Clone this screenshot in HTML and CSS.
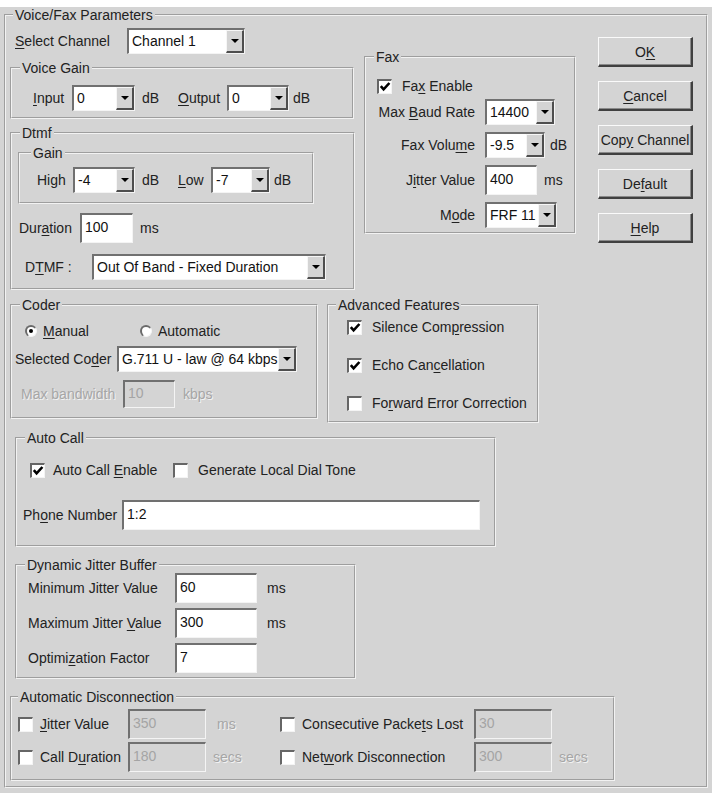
FILE: index.html
```html
<!DOCTYPE html>
<html lang="en">
<head>
    <meta charset="UTF-8">
    <meta name="viewport" content="width=device-width, initial-scale=1.0">
    <title>Voice/Fax Parameters</title>
    <link rel="stylesheet" href="styles.css">
</head>
<body>
    <div class="dialog">
        <fieldset class="group outer">
            <legend>Voice/Fax Parameters</legend>

            <div class="top-section">
                <!-- Left column: channel, voice gain, dtmf -->
                <div class="left-col">
                    <div class="channel-row">
                        <span><u>S</u>elect Channel</span>
                        <div class="combo"><span class="value">Channel 1</span><span class="drop"></span></div>
                    </div>

                    <fieldset class="group voice-gain">
                        <legend>Voice Gain</legend>
                        <div class="gain-row">
                            <span><u>I</u>nput</span>
                            <div class="combo"><span class="value">0</span><span class="drop"></span></div>
                            <span class="unit">dB</span>
                            <span><u>O</u>utput</span>
                            <div class="combo"><span class="value">0</span><span class="drop"></span></div>
                            <span class="unit unit-tight">dB</span>
                        </div>
                    </fieldset>

                    <fieldset class="group dtmf">
                        <legend>Dtmf</legend>
                        <fieldset class="group dtmf-gain">
                            <legend>Gain</legend>
                            <div class="dtmf-gain-row">
                                <span>High</span>
                                <div class="combo"><span class="value">-4</span><span class="drop"></span></div>
                                <span class="unit">dB</span>
                                <span><u>L</u>ow</span>
                                <div class="combo"><span class="value">-7</span><span class="drop"></span></div>
                                <span class="unit unit-tight">dB</span>
                            </div>
                        </fieldset>
                        <div class="duration-row">
                            <span>Dur<u>a</u>tion</span>
                            <div class="field">100</div>
                            <span class="unit">ms</span>
                        </div>
                        <div class="dtmf-row">
                            <span>D<u>T</u>MF :</span>
                            <div class="combo"><span class="value">Out Of Band - Fixed Duration</span><span class="drop"></span></div>
                        </div>
                    </fieldset>
                </div>

                <!-- Fax -->
                <fieldset class="group fax">
                    <legend>Fax</legend>
                    <div class="check-row fax-enable">
                        <span class="check on"><svg viewBox="0 0 12 12"><path d="M1.8 5.2 L4.6 8.4 L10.4 2" /></svg></span>
                        <span>Fa<u>x</u> Enable</span>
                    </div>
                    <div class="fax-grid">
                        <span class="label">Max <u>B</u>aud Rate</span>
                        <div class="combo combo-baud"><span class="value">14400</span><span class="drop"></span></div>

                        <span class="label">Fax Volu<u>m</u>e</span>
                        <div class="with-unit">
                            <div class="combo combo-volume"><span class="value">-9.5</span><span class="drop"></span></div>
                            <span>dB</span>
                        </div>

                        <span class="label">J<u>i</u>tter Value</span>
                        <div class="with-unit">
                            <div class="field field-jitter">400</div>
                            <span class="unit-ms">ms</span>
                        </div>

                        <span class="label">M<u>o</u>de</span>
                        <div class="combo combo-mode"><span class="value">FRF 11</span><span class="drop"></span></div>
                    </div>
                </fieldset>

                <!-- Buttons -->
                <div class="buttons">
                    <button>O<u>K</u></button>
                    <button><u>C</u>ancel</button>
                    <button>Cop<u>y</u> Channel</button>
                    <button>De<u>f</u>ault</button>
                    <button><u>H</u>elp</button>
                </div>
            </div>

            <div class="coder-section">
                <fieldset class="group coder">
                    <legend>Coder</legend>
                    <div class="radio-row">
                        <div class="radio-item first"><span class="radio on"></span><span><u>M</u>anual</span></div>
                        <div class="radio-item"><span class="radio"></span><span>Automatic</span></div>
                    </div>
                    <div class="coder-row">
                        <span>Selected Co<u>d</u>er</span>
                        <div class="combo"><span class="value">G.711 U - law @ 64 kbps</span><span class="drop"></span></div>
                    </div>
                    <div class="bandwidth-row">
                        <span class="disabled-text">Max bandwidth</span>
                        <div class="field disabled">10</div>
                        <span class="unit disabled-text">kbps</span>
                    </div>
                </fieldset>

                <fieldset class="group advanced">
                    <legend>Advanced Features</legend>
                    <div class="check-row">
                        <span class="check on"><svg viewBox="0 0 12 12"><path d="M1.8 5.2 L4.6 8.4 L10.4 2" /></svg></span>
                        <span>Silence Com<u>p</u>ression</span>
                    </div>
                    <div class="check-row">
                        <span class="check on"><svg viewBox="0 0 12 12"><path d="M1.8 5.2 L4.6 8.4 L10.4 2" /></svg></span>
                        <span>Echo Can<u>c</u>ellation</span>
                    </div>
                    <div class="check-row">
                        <span class="check"></span>
                        <span>Fo<u>r</u>ward Error Correction</span>
                    </div>
                </fieldset>
            </div>

            <fieldset class="group auto-call">
                <legend>Auto Call</legend>
                <div class="auto-call-row">
                    <div class="check-row first">
                        <span class="check on"><svg viewBox="0 0 12 12"><path d="M1.8 5.2 L4.6 8.4 L10.4 2" /></svg></span>
                        <span>Auto Call <u>E</u>nable</span>
                    </div>
                    <div class="check-row">
                        <span class="check"></span>
                        <span>Generate Local Dial Tone</span>
                    </div>
                </div>
                <div class="phone-row">
                    <span>Ph<u>o</u>ne Number</span>
                    <div class="field">1:2</div>
                </div>
            </fieldset>

            <fieldset class="group jitter-buffer">
                <legend>Dynamic Jitter Buffer</legend>
                <div class="jitter-grid">
                    <span>Minimum Jitter Value</span>
                    <div class="field">60</div>
                    <span class="unit">ms</span>

                    <span>Maximum Jitter <u>V</u>alue</span>
                    <div class="field">300</div>
                    <span class="unit">ms</span>

                    <span>Optimi<u>z</u>ation Factor</span>
                    <div class="field">7</div>
                    <span></span>
                </div>
            </fieldset>

            <fieldset class="group disconnect">
                <legend>Automatic Disconnection</legend>
                <div class="disconnect-grid">
                    <div class="check-row"><span class="check"></span><span><u>J</u>itter Value</span></div>
                    <div class="field disabled">350</div>
                    <span class="unit disabled-text">ms</span>
                    <div class="check-row"><span class="check"></span><span>Consecutive Packe<u>t</u>s Lost</span></div>
                    <div class="field disabled">30</div>
                    <span></span>

                    <div class="check-row"><span class="check"></span><span>Call D<u>u</u>ration</span></div>
                    <div class="field disabled">180</div>
                    <span class="unit unit-secs disabled-text">secs</span>
                    <div class="check-row"><span class="check"></span><span>Net<u>w</u>ork Disconnection</span></div>
                    <div class="field disabled">300</div>
                    <span class="unit unit-secs disabled-text">secs</span>
                </div>
            </fieldset>
        </fieldset>
    </div>
</body>
</html>
```

FILE: styles.css
```css
/* Base */
body {
    margin: 0;
    background-color: #fff;
    font-family: "Liberation Sans", Arial, sans-serif;
    font-size: 14px;
    line-height: 16px;
    color: #222;
}

.dialog {
    margin-top: 7px;
    height: 786px;
    background-color: #d4d4d4;
    overflow: hidden;
}

u {
    text-underline-offset: 2px;
}

/* Group boxes */
.group {
    box-sizing: border-box;
    margin: 0;
    padding: 0;
    border: 2px groove #f2f2f2;
    min-width: 0;
}

.group legend {
    margin-left: 8px;
    padding: 0 2px;
    line-height: 16px;
}

.outer {
    margin-left: 4px;
    width: 704px;
    height: 781px;
    padding: 0 4px;
}

.outer > legend {
    margin-left: 3px;
}

/* Controls */
.combo {
    box-sizing: border-box;
    display: flex;
    height: 26px;
    background-color: #fff;
    border-style: solid;
    border-width: 2px 1px 1px 2px;
    border-color: #707070 #f4f4f4 #f4f4f4 #707070;
}

.combo .value {
    flex: 1;
    padding-left: 3px;
    line-height: 23px;
    white-space: nowrap;
    overflow: hidden;
    color: #111;
}

.combo .drop {
    box-sizing: border-box;
    width: 18px;
    flex: none;
    display: flex;
    align-items: center;
    justify-content: center;
    background-color: #d4d4d4;
    border-style: solid;
    border-width: 1px 2px 2px 1px;
    border-color: #f6f6f6 #4e4e4e #4e4e4e #f6f6f6;
}

.combo .drop::after {
    content: "";
    border-left: 4px solid transparent;
    border-right: 4px solid transparent;
    border-top: 4px solid #000;
}

.field {
    box-sizing: border-box;
    height: 30px;
    padding: 0 3px;
    display: flex;
    align-items: center;
    padding-bottom: 3px;
    background-color: #fff;
    border-style: solid;
    border-width: 2px 1px 1px 2px;
    border-color: #707070 #f4f4f4 #f4f4f4 #707070;
    color: #111;
}

.field.disabled {
    background-color: #d4d4d4;
    color: #a4a4a4;
}

.disabled-text {
    color: #a6a6a6;
    text-shadow: 1px 1px 0 #f2f2f2;
}

.check {
    box-sizing: border-box;
    width: 15px;
    height: 15px;
    flex: none;
    background-color: #fff;
    border-style: solid;
    border-width: 2px 1px 1px 2px;
    border-color: #666 #f4f4f4 #f4f4f4 #666;
}

.check svg {
    display: block;
    width: 12px;
    height: 12px;
}

.check svg path {
    fill: none;
    stroke: #000;
    stroke-width: 2.6;
}

.check-row {
    display: flex;
    align-items: center;
    height: 16px;
    gap: 10px;
}

.radio {
    position: relative;
    box-sizing: border-box;
    width: 12px;
    height: 12px;
    flex: none;
    border-radius: 50%;
    background-color: #fff;
    border-style: solid;
    border-width: 2px 1px 1px 2px;
    border-color: #6a6a6a #f4f4f4 #f4f4f4 #6a6a6a;
}

.radio.on::after {
    content: "";
    position: absolute;
    left: 2px;
    top: 2px;
    width: 4px;
    height: 4px;
    border-radius: 50%;
    background-color: #000;
}

.unit {
    padding-left: 7px;
}

/* Top section */
.top-section {
    display: flex;
    align-items: flex-start;
}

.left-col {
    width: 345px;
}

.channel-row {
    display: grid;
    grid-template-columns: 112px 118px;
    align-items: center;
    margin: 5px 0 0 5px;
}

.voice-gain {
    margin-top: 6px;
    width: 344px;
    height: 59px;
}

.gain-row {
    display: grid;
    grid-template-columns: 39px 63px 43px 49px 62px auto;
    align-items: center;
    margin-top: 9px;
    padding-left: 21px;
}

.unit-tight {
    padding-left: 4px;
}

.dtmf {
    margin-top: 6px;
    width: 345px;
    height: 165px;
}

.dtmf-gain {
    margin: 4px 0 0 6px;
    width: 296px;
    height: 59px;
}

.dtmf-gain legend {
    margin-left: 11px;
}

.dtmf-gain-row {
    display: grid;
    grid-template-columns: 36px 62px 43px 33px 59px auto;
    align-items: center;
    margin-top: 6px;
    padding-left: 17px;
}

.duration-row {
    display: grid;
    grid-template-columns: 61px 53px auto;
    align-items: center;
    margin-top: 9px;
    padding-left: 7px;
}

.dtmf-row {
    display: grid;
    grid-template-columns: 67px 234px;
    align-items: center;
    margin-top: 11px;
    padding-left: 13px;
}

/* Fax */
.fax {
    margin: 26px 0 0 9px;
    width: 212px;
    height: 185px;
}

.fax-enable {
    margin-top: 13px;
    padding-left: 11px;
}

.fax-grid {
    display: grid;
    grid-template-columns: 119px auto;
    grid-template-rows: 26px 26px 30px 26px;
    row-gap: 7px;
    align-items: center;
    margin-top: 5px;
}

.fax-grid .label {
    text-align: right;
    padding-right: 10px;
}

.with-unit {
    display: flex;
    align-items: center;
    gap: 5px;
}

.combo-baud { width: 70px; }
.combo-volume { width: 60px; }
.combo-mode { width: 72px; }
.field-jitter { width: 52px; }
.unit-ms { padding-left: 2px; }

/* Buttons */
.buttons {
    display: flex;
    flex-direction: column;
    gap: 14px;
    margin: 14px 0 0 22px;
}

.buttons button {
    box-sizing: border-box;
    width: 95px;
    height: 30px;
    padding: 0;
    font-family: inherit;
    font-size: 14px;
    color: #222;
    background-color: #d4d4d4;
    border-style: solid;
    border-width: 1px 2px 2px 1px;
    border-color: #fafafa #404040 #404040 #fafafa;
    box-shadow: inset -1px -1px 0 #8a8a8a;
}

/* Coder and advanced */
.coder-section {
    display: flex;
    align-items: flex-start;
    margin-top: 7px;
}

.coder {
    width: 308px;
    height: 122px;
}

.radio-row {
    display: flex;
    align-items: center;
    height: 16px;
    margin-top: 10px;
    padding-left: 13px;
}

.radio-item {
    display: flex;
    align-items: center;
    gap: 6px;
}

.radio-item.first {
    width: 115px;
}

.coder-row {
    display: grid;
    grid-template-columns: 102px 180px;
    align-items: center;
    margin-top: 7px;
    padding-left: 3px;
}

.bandwidth-row {
    display: grid;
    grid-template-columns: 102px 52px auto;
    align-items: center;
    margin-top: 8px;
    padding-left: 9px;
}

.bandwidth-row .field {
    height: 28px;
}

.bandwidth-row .unit {
    padding-left: 8px;
}

.advanced {
    margin-left: 9px;
    width: 212px;
    height: 126px;
}

.advanced legend {
    margin-left: 7px;
}

.advanced .check-row {
    margin-top: 22px;
    padding-left: 18px;
}

.advanced .check-row:first-of-type {
    margin-top: 6px;
}

/* Auto call */
.auto-call {
    margin: 7px 0 0 5px;
    width: 481px;
    height: 117px;
}

.auto-call-row {
    display: flex;
    margin-top: 16px;
    padding-left: 13px;
}

.auto-call-row .first {
    width: 143px;
    gap: 8px;
}

.phone-row {
    display: grid;
    grid-template-columns: 99px 358px;
    align-items: center;
    margin-top: 22px;
    padding-left: 6px;
}

/* Jitter buffer */
.jitter-buffer {
    margin: 10px 0 0 5px;
    width: 341px;
    height: 122px;
}

.jitter-grid {
    display: grid;
    grid-template-columns: 147px 82px auto;
    grid-auto-rows: 30px;
    row-gap: 5px;
    align-items: center;
    padding-left: 11px;
}

.jitter-grid .unit {
    padding-left: 10px;
}

/* Automatic disconnection */
.disconnect {
    margin-top: 10px;
    width: 605px;
    height: 92px;
}

.disconnect legend {
    margin-left: 6px;
}

.disconnect-grid {
    display: grid;
    grid-template-columns: 110px 78px 74px 194px 78px auto;
    grid-auto-rows: 30px;
    row-gap: 3px;
    align-items: center;
    margin-top: 4px;
    padding-left: 6px;
}

.disconnect-grid .check-row {
    gap: 7px;
}

.disconnect-grid .unit {
    padding-left: 11px;
}

.disconnect-grid .unit-secs {
    padding-left: 7px;
}
```
